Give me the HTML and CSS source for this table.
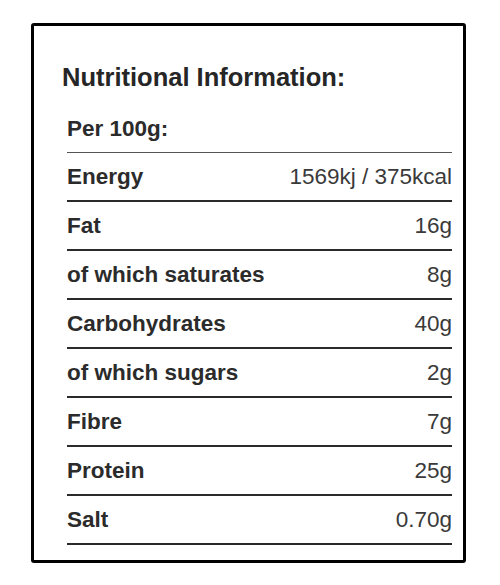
FILE: index.html
```html
<!DOCTYPE html>
<html lang="en">
<head>
<meta charset="utf-8">
<title>Nutritional Information</title>
<link rel="stylesheet" href="styles.css">
</head>
<body>
<section class="panel">
  <h2 class="panel-title">Nutritional Information:</h2>
  <table class="nutri">
    <thead>
      <tr class="per"><th colspan="2">Per 100g:</th></tr>
    </thead>
    <tbody>
      <tr><th>Energy</th><td>1569kj / 375kcal</td></tr>
      <tr><th>Fat</th><td>16g</td></tr>
      <tr><th>of which saturates</th><td>8g</td></tr>
      <tr><th>Carbohydrates</th><td>40g</td></tr>
      <tr><th>of which sugars</th><td>2g</td></tr>
      <tr><th>Fibre</th><td>7g</td></tr>
      <tr><th>Protein</th><td>25g</td></tr>
      <tr><th>Salt</th><td>0.70g</td></tr>
    </tbody>
  </table>
</section>
</body>
</html>
```

FILE: styles.css
```css
html, body {
  margin: 0;
  padding: 0;
  background: #fff;
}
body {
  font-family: "Liberation Sans", Arial, sans-serif;
  color: #333;
  padding: 23px 0 0 31px;
}
.panel {
  box-sizing: border-box;
  width: 435px;
  border: 3px solid #000;
  border-radius: 3px;
  padding: 36px 11px 15px 28px;
}
.panel-title {
  margin: 0 0 13px 0;
  font-size: 25.5px;
  line-height: 30px;
  font-weight: bold;
  color: #262626;
}
.nutri {
  margin-left: 5px;
  width: 385px;
  border-collapse: collapse;
  font-size: 22.5px;
  line-height: 27px;
}
.nutri th,
.nutri td {
  padding: 10px 0;
}
.nutri th {
  text-align: left;
  font-weight: bold;
  color: #2b2b2b;
}
.nutri td {
  text-align: right;
  font-weight: normal;
  color: #3a3a3a;
}
.nutri .per th {
  border-bottom: 1px solid #555;
}
.nutri tbody tr {
  border-bottom: 2px solid #2a2a2a;
}
```
